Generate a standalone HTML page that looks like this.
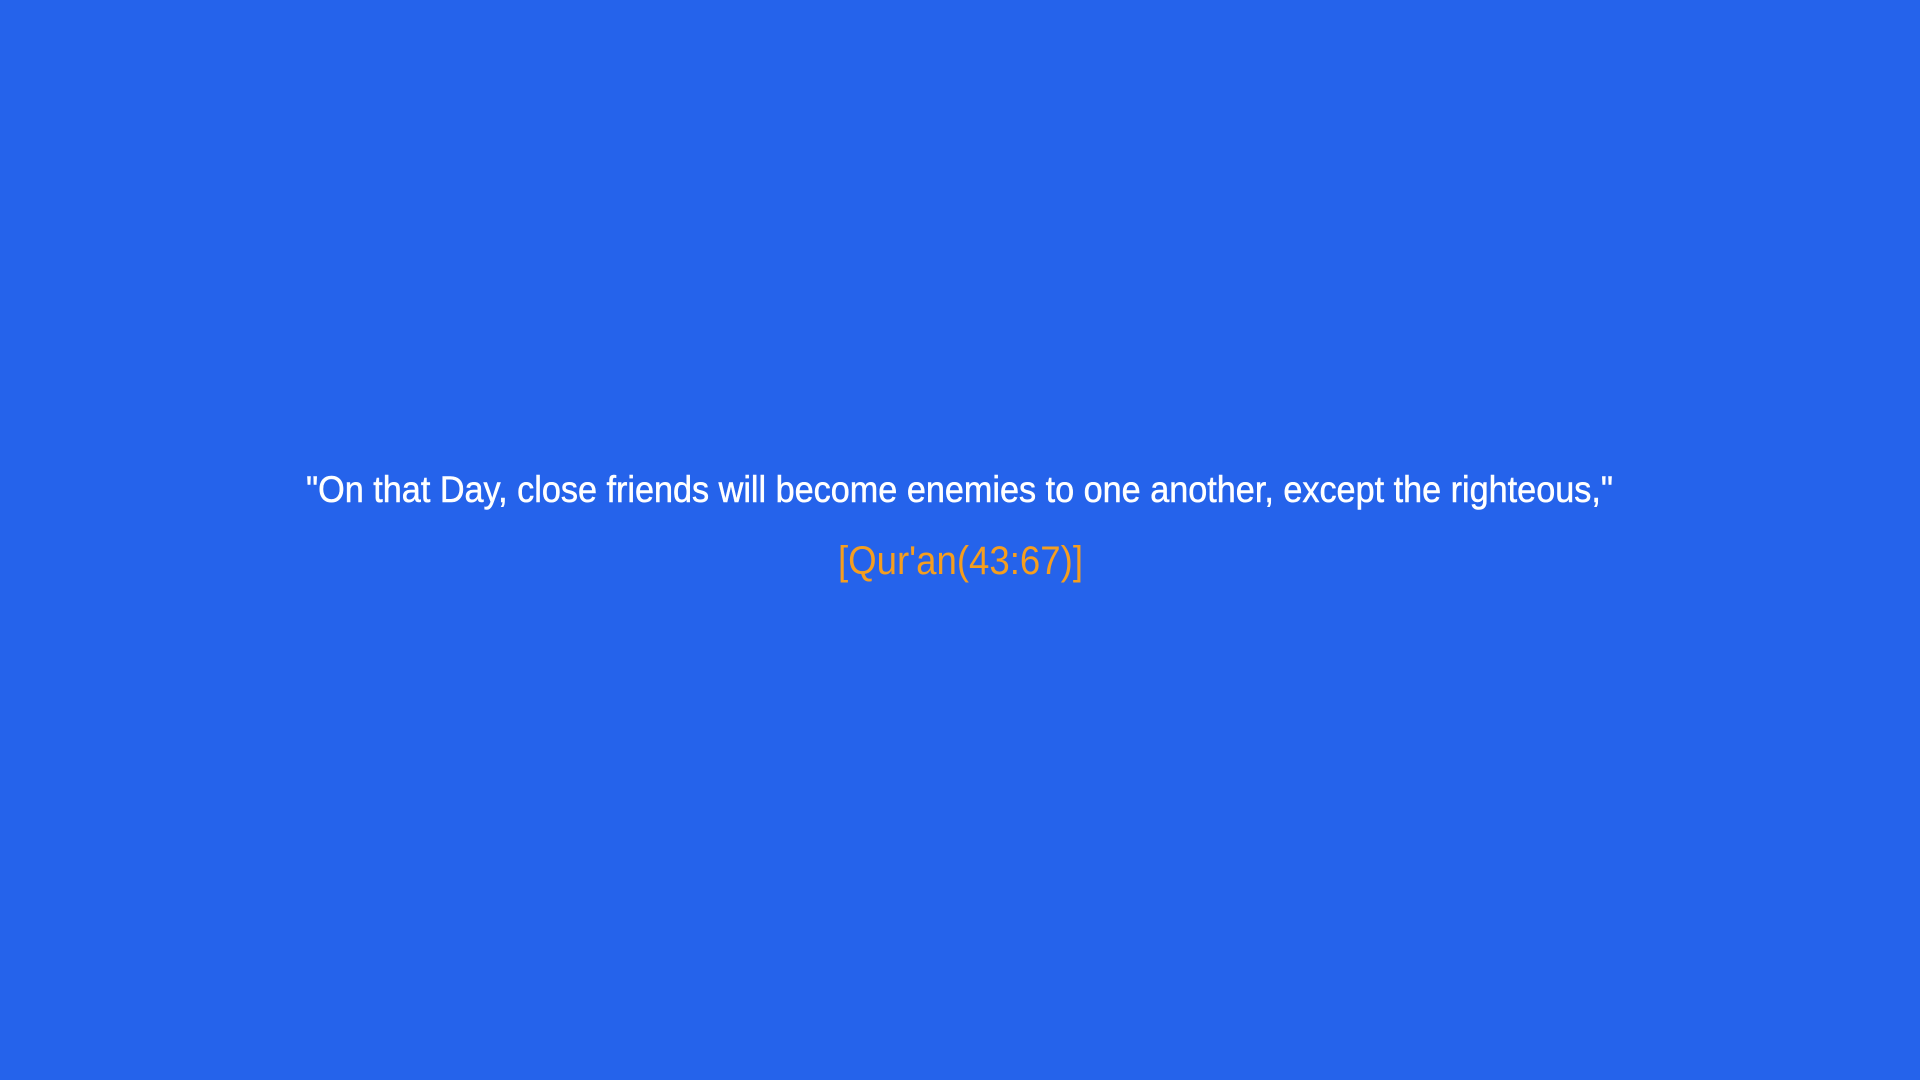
<!DOCTYPE html>
<html><head><meta charset="utf-8"><style>
html,body{margin:0;padding:0;width:1920px;height:1080px;background:#2563eb;overflow:hidden}
svg{display:block}
</style></head><body>
<svg width="1920" height="1080" xmlns="http://www.w3.org/2000/svg">
<text x="306" y="502" textLength="1307" lengthAdjust="spacingAndGlyphs" font-family="Liberation Sans, sans-serif" font-size="37" fill="#ffffff" stroke="#ffffff" stroke-width="0.5">"On that Day, close friends will become enemies to one another, except the righteous,"</text>
<text x="838" y="574" textLength="245" lengthAdjust="spacingAndGlyphs" font-family="Liberation Sans, sans-serif" font-size="40" fill="#f59e1f">[Qur'an(43:67)]</text>
</svg>
</body></html>
